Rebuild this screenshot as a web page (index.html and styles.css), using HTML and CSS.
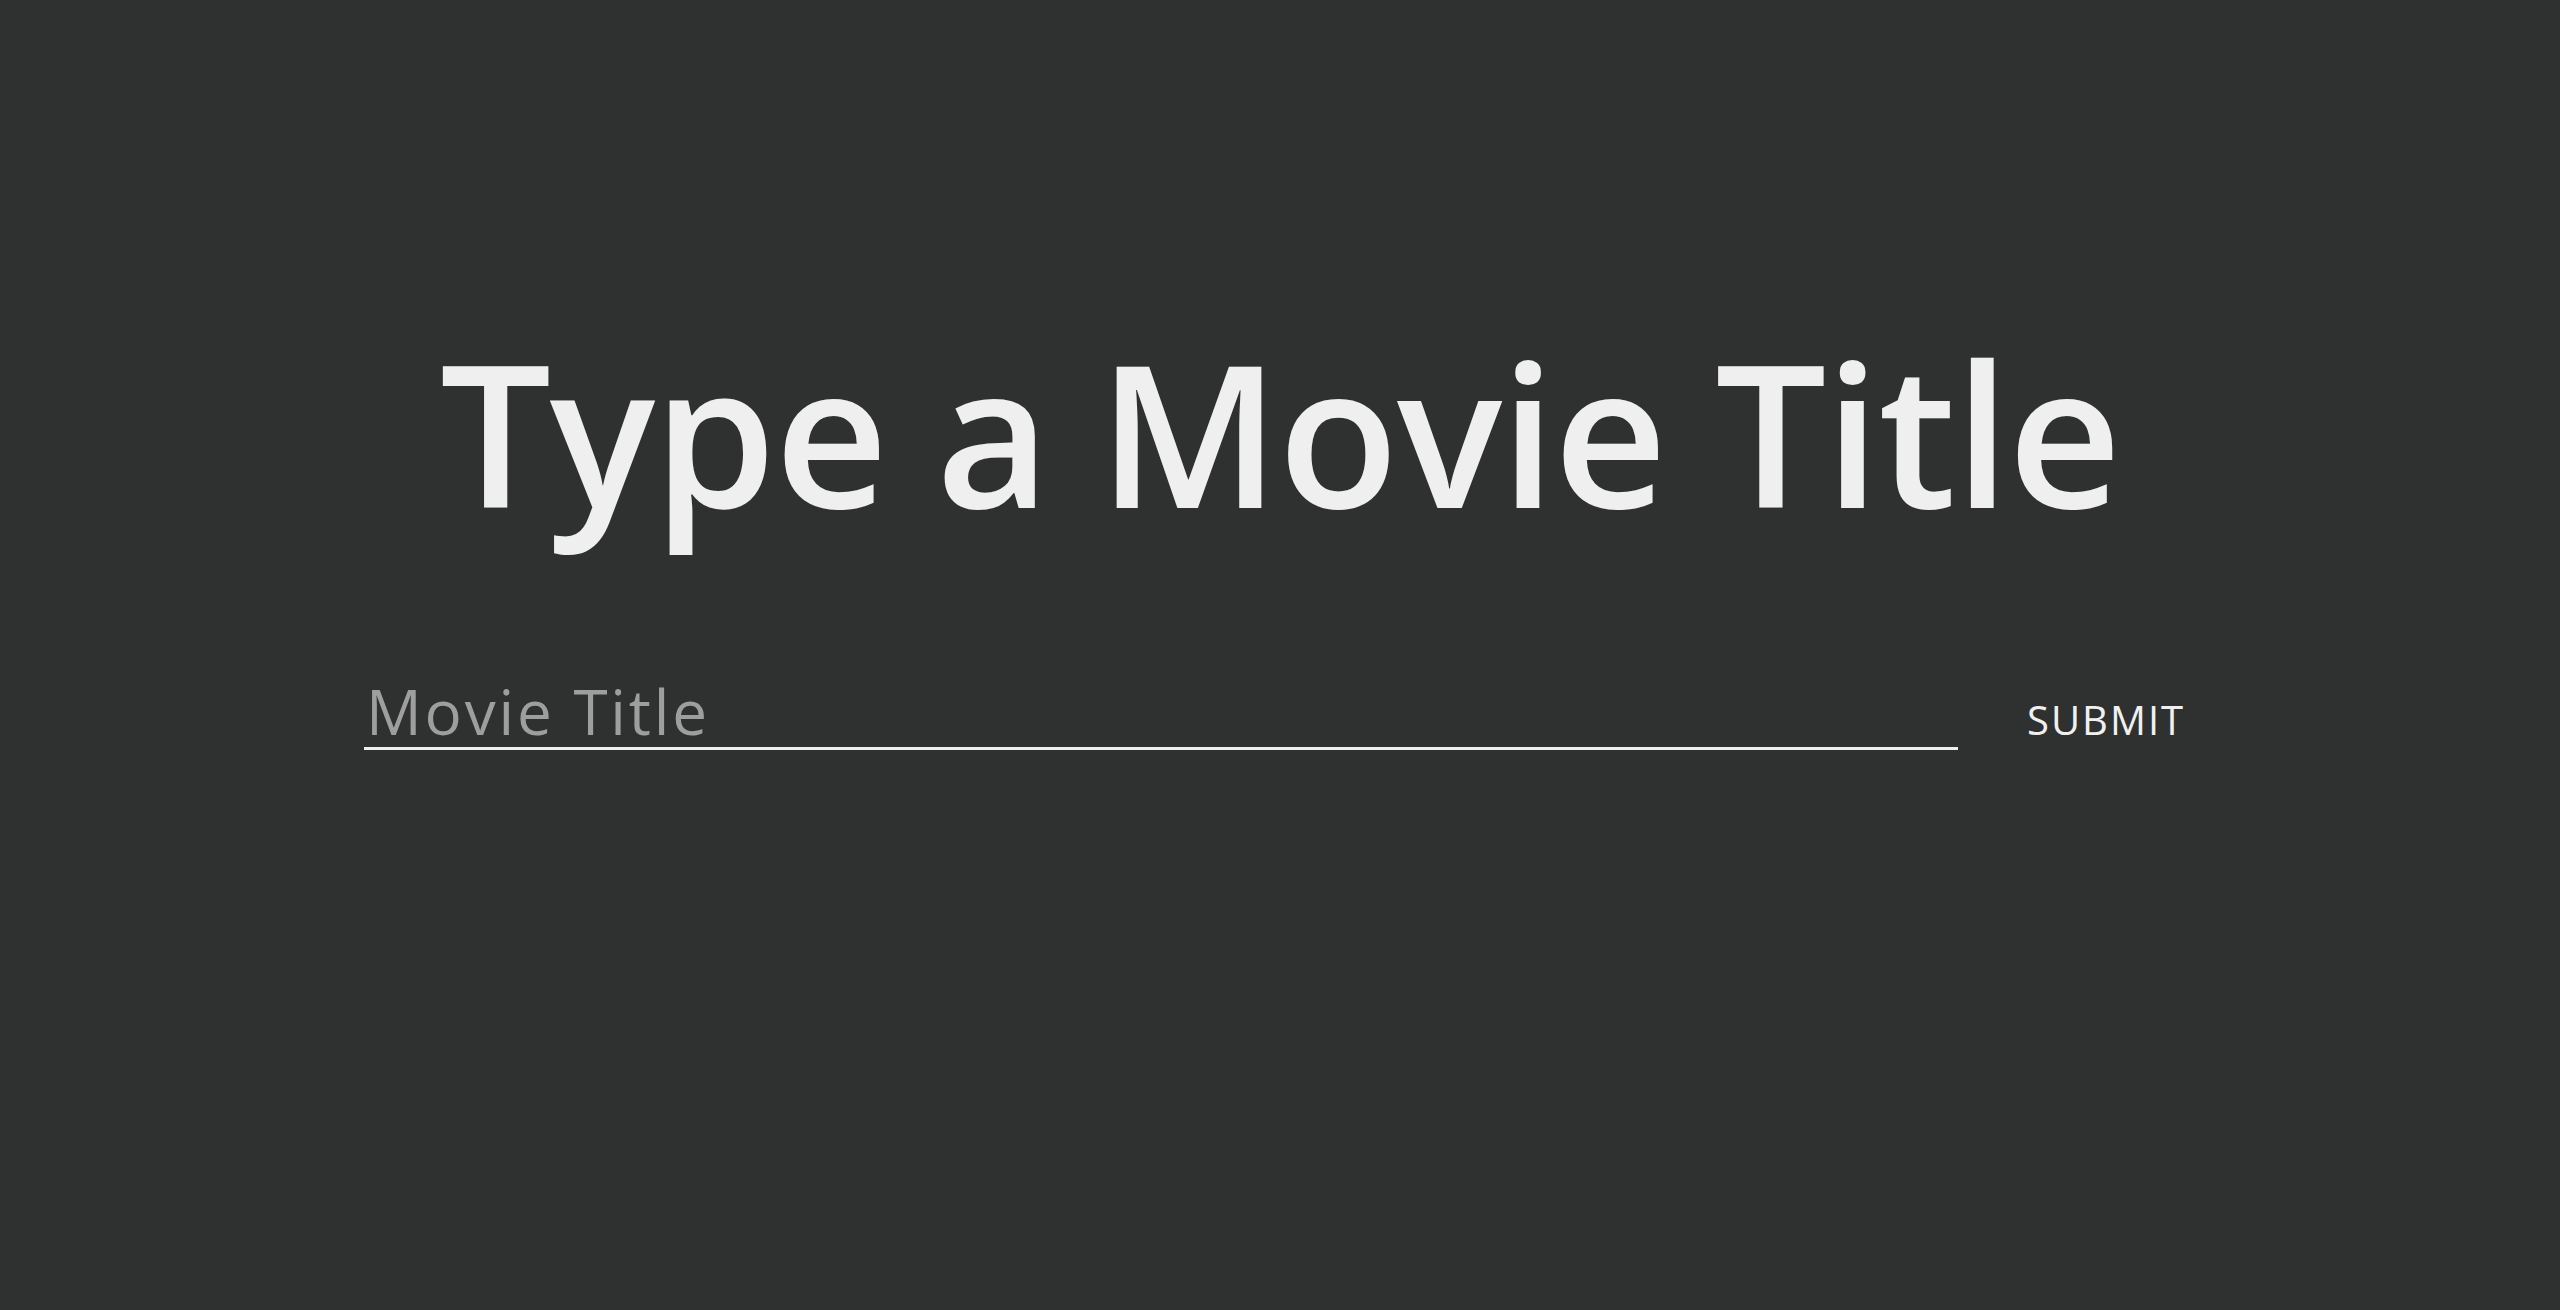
FILE: index.html
```html
<!DOCTYPE html>
<html lang="en">
<head>
<meta charset="utf-8">
<title>Movie Search</title>
<link rel="stylesheet" href="styles.css">
</head>
<body>
<main class="page">
  <h1 class="title">Type a Movie Title</h1>
  <form class="search">
    <input class="search-input" type="text" placeholder="Movie Title">
    <button class="search-button" type="button">SUBMIT</button>
  </form>
</main>
</body>
</html>
```

FILE: styles.css
```css
html, body {
  margin: 0;
  padding: 0;
  height: 100%;
}
body {
  background: #2f3030;
  color: #efefef;
  font-family: "Open Sans", "Liberation Sans", sans-serif;
}
.page {
  display: flex;
  flex-direction: column;
  align-items: center;
  padding-top: 333px;
}
.title {
  margin: 0;
  font-size: 197px;
  line-height: 1;
  font-weight: 600;
  color: #efefef;
  letter-spacing: -1.6px;
}
.search {
  display: flex;
  align-items: baseline;
  width: 1832px;
  margin-top: 145px;
}
.search-input {
  width: 1594px;
  box-sizing: border-box;
  background: transparent;
  border: none;
  border-bottom: 3px solid #eeeeee;
  outline: none;
  padding: 0 0 0 2px;
  font-family: "Open Sans", "Liberation Sans", sans-serif;
  font-size: 62px;
  letter-spacing: 2.8px;
  line-height: 74px;
  height: 75px;
  color: #efefef;
}
.search-input::placeholder {
  color: #9e9e9e;
}
.search-button {
  margin-left: 69px;
  padding: 0;
  background: transparent;
  border: none;
  color: #f0f0f0;
  font-family: "Open Sans", "Liberation Sans", sans-serif;
  font-size: 40px;
  letter-spacing: 2px;
  cursor: pointer;
}
```
